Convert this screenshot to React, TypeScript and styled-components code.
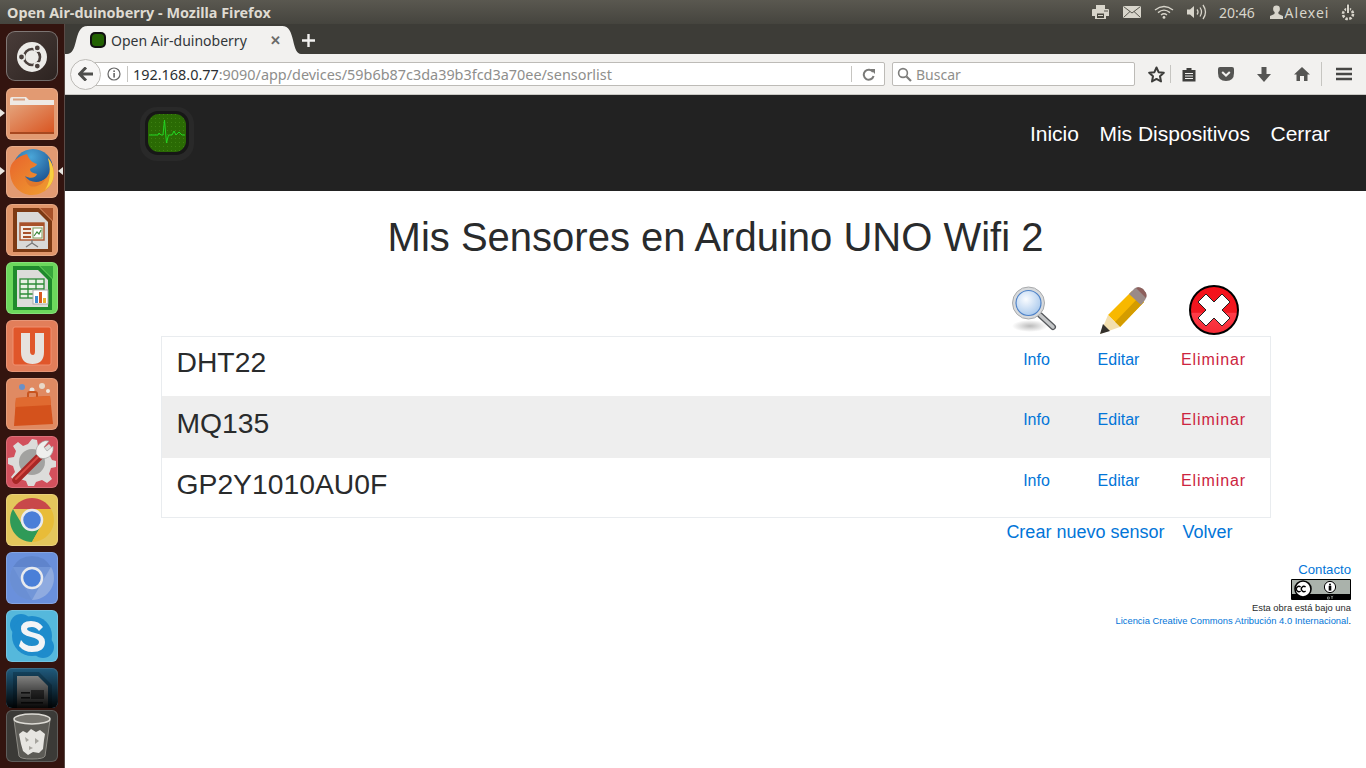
import styled, { createGlobalStyle } from "styled-components";
import type { ReactNode } from "react";

const GlobalStyle = createGlobalStyle`
  html, body { margin: 0; padding: 0; height: 100%; background: #fff; overflow: hidden; }
  #root { height: 100%; }
  * { box-sizing: border-box; }
`;

const UI_FONT = `"Noto Sans", "Open Sans", sans-serif`;
const WEB_FONT = `"Liberation Sans", Arial, sans-serif`;

/* ---------- desktop shell ---------- */
const Desktop = styled.div`
  width: 1366px;
  height: 768px;
  display: flex;
  flex-direction: column;
  overflow: hidden;
`;

const TopPanel = styled.div`
  height: 24px;
  flex-shrink: 0;
  display: flex;
  align-items: center;
  justify-content: space-between;
  padding-left: 7px;
  background: linear-gradient(#5a5850, #45443e);
  font-family: ${UI_FONT};
`;

const WindowTitle = styled.div`
  font-size: 14.4px;
  font-weight: 700;
  color: #dfdbd2;
`;

const Tray = styled.div`
  display: flex;
  align-items: center;
  height: 24px;
`;

const TraySlot = styled.div<{ $w: number }>`
  width: ${(p) => p.$w}px;
  display: flex;
  justify-content: center;
  align-items: center;
  font-size: 14px;
  color: #d8d5cb;
  white-space: nowrap;
`;

const ClockSlot = styled(TraySlot)`
  justify-content: flex-start;
  padding-left: 5px;
`;

const UserName = styled(TraySlot)`
  letter-spacing: 1px;
`;

const Body = styled.div`
  flex: 1;
  display: flex;
  min-height: 0;
`;

const Launcher = styled.div`
  width: 65px;
  flex-shrink: 0;
  position: relative;
  display: flex;
  flex-direction: column;
  align-items: flex-start;
  padding: 7px 0 0 6px;
  gap: 6px;
  background: #33140f;
  border-right: 1px solid #5a4a46;
  overflow: hidden;
`;

const Tile = styled.div<{ $bg: string; $cut?: boolean }>`
  width: 52px;
  height: ${(p) => (p.$cut ? 40 : 52)}px;
  flex-shrink: 0;
  border-radius: 6px;
  background: ${(p) => p.$bg};
  box-shadow: inset 0 0 0 1px rgba(255, 255, 255, 0.18);
  overflow: hidden;
  position: relative;
`;

const DashTile = styled(Tile)`
  height: 50px;
  margin-bottom: 1px;
  border-radius: 9px;
  box-shadow: inset 0 0 0 1px rgba(255, 255, 255, 0.32);
`;

const CutFade = styled.div`
  position: absolute;
  inset: 0;
  background: linear-gradient(rgba(0, 0, 0, 0.25), rgba(0, 0, 0, 0.97));
`;

const TrashTile = styled(Tile)`
  margin-top: -4px;
`;

const Pip = styled.div<{ $top: number; $right?: boolean }>`
  position: absolute;
  top: ${(p) => p.$top}px;
  ${(p) => (p.$right ? "right: 1px;" : "left: 0;")}
  width: 0;
  height: 0;
  border-top: 4px solid transparent;
  border-bottom: 4px solid transparent;
  ${(p) =>
    p.$right
      ? "border-right: 5px solid #e8e6e1;"
      : "border-left: 5px solid #e8e6e1;"}
`;

/* ---------- browser chrome ---------- */
const Browser = styled.div`
  flex: 1;
  min-width: 0;
  display: flex;
  flex-direction: column;
`;

const TabStrip = styled.div`
  height: 30px;
  flex-shrink: 0;
  display: flex;
  align-items: flex-end;
  padding-left: 22px;
  background: #3d3c37;
  font-family: ${UI_FONT};
`;

const Tab = styled.div`
  position: relative;
  width: 196px;
  height: 28px;
  display: flex;
  align-items: center;
  gap: 5px;
  background: #f2f1ef;
  font-size: 14px;
  color: #33373a;
  padding: 0 2px 0 3px;
`;

const TabEdge = styled.svg<{ $side: "left" | "right" }>`
  position: absolute;
  top: 0;
  ${(p) => (p.$side === "left" ? "left: -20px;" : "right: -18px;")}
  display: block;
`;

const TabTitle = styled.span`
  flex: 1;
  white-space: nowrap;
`;

const TabClose = styled.span`
  font-size: 13px;
  font-weight: 700;
  color: #6a6a68;
`;

const NewTab = styled.div`
  width: 24px;
  height: 28px;
  margin-left: 13px;
  display: flex;
  align-items: center;
  justify-content: center;
`;

const Toolbar = styled.div`
  height: 41px;
  flex-shrink: 0;
  display: flex;
  align-items: center;
  padding-left: 5px;
  background: #f2f1ef;
  border-bottom: 1px solid #c9c8c4;
  font-family: ${UI_FONT};
`;

const BackButton = styled.div`
  position: relative;
  z-index: 1;
  width: 31px;
  height: 31px;
  margin-right: -15px;
  border-radius: 50%;
  background: #f7f6f5;
  border: 1px solid #bdbbb7;
  display: flex;
  align-items: center;
  justify-content: center;
`;

const Field = styled.div<{ $w: number }>`
  width: ${(p) => p.$w}px;
  height: 24px;
  flex-shrink: 0;
  display: flex;
  align-items: center;
  background: #fff;
  border: 1px solid #bdbbb7;
  border-radius: 2px;
`;

const UrlField = styled(Field)`
  padding-left: 13px;
  margin-right: 7px;
`;

const UrlText = styled.div`
  flex: 1;
  padding-left: 5px;
  font-size: 14.42px;
  color: #8e8e8c;
  white-space: nowrap;
`;

const UrlHost = styled.span`
  color: #2b2f33;
`;

const Divider = styled.div<{ $h: number }>`
  width: 1px;
  height: ${(p) => p.$h}px;
  background: #c6c5c1;
  flex-shrink: 0;
`;

const InfoSlot = styled.div`
  width: 27px;
  display: flex;
  justify-content: center;
`;

const ReloadSlot = styled.div`
  width: 32px;
  display: flex;
  justify-content: center;
`;

const SearchIconSlot = styled.div`
  width: 23px;
  display: flex;
  justify-content: center;
`;

const Placeholder = styled.span`
  font-size: 14px;
  color: #8f8f8c;
`;

const ToolSlot = styled.div<{ $w: number }>`
  width: ${(p) => p.$w}px;
  flex-shrink: 0;
  display: flex;
  justify-content: center;
  align-items: center;
`;

const ToolGroup = styled.div`
  display: flex;
  align-items: center;
  margin-left: 8px;
`;

/* ---------- page ---------- */
const Page = styled.div`
  flex: 1;
  background: #fff;
  font-family: ${WEB_FONT};
  color: #292b2c;
`;

const NavBar = styled.div`
  height: 96px;
  display: flex;
  justify-content: space-between;
  background: #222;
  padding: 11px 36px 0 74px;
`;

const LogoWrap = styled.div`
  filter: blur(0.4px);
`;

const NavLinks = styled.div`
  display: flex;
  gap: 20.5px;
  padding-top: 16px;
`;

const NavLink = styled.a`
  font-size: 21px;
  line-height: 24px;
  color: #fff;
`;

const Container = styled.div`
  width: 1110px;
  margin: 0 auto;
`;

const PageTitle = styled.h1`
  margin: 0;
  padding-top: 22px;
  font-size: 40px;
  line-height: 48px;
  font-weight: 400;
  text-align: center;
`;

const ActionGrid = styled.div`
  display: grid;
  grid-template-columns: 1fr 82px 82px 108px;
  padding-right: 3px;
`;

const IconRow = styled(ActionGrid)`
  height: 51px;
  margin-top: 24px;
  align-items: start;
`;

const IconCell = styled.div`
  display: flex;
  justify-content: center;
`;

const SensorList = styled.div`
  border: 1px solid #e9ecef;
  display: flex;
  flex-direction: column;
`;

const SensorRow = styled(ActionGrid)<{ $striped?: boolean; $h: number }>`
  height: ${(p) => p.$h}px;
  background: ${(p) => (p.$striped ? "#eee" : "#fff")};
  padding-left: 15px;
  padding-right: 2px;
`;

const SensorName = styled.div<{ $pad: number }>`
  font-size: 28.3px;
  line-height: 34px;
  padding-top: ${(p) => p.$pad}px;
`;

const ActionLink = styled.a<{ $danger?: boolean; $pad: number }>`
  text-align: center;
  font-size: 16px;
  line-height: 24px;
  padding-top: ${(p) => p.$pad}px;
  color: ${(p) => (p.$danger ? "#cc2440" : "#0275d8")};
  letter-spacing: ${(p) => (p.$danger ? "0.9px" : "0")};
`;

const BottomLinks = styled.div`
  display: flex;
  justify-content: flex-end;
  gap: 18px;
  padding: 2px 38px 0 0;
`;

const BottomLink = styled.a`
  font-size: 18px;
  line-height: 24px;
  color: #0275d8;
`;

const Footer = styled.div`
  margin-top: 18px;
  padding-right: 15px;
  display: flex;
  flex-direction: column;
  align-items: flex-end;
`;

const ContactLink = styled.a`
  font-size: 13.2px;
  line-height: 16px;
  color: #0275d8;
`;

const Badge = styled.div`
  height: 21px;
  margin: 1px 0 1px;
  display: flex;
`;

const License = styled.div`
  font-size: 9.4px;
  line-height: 13px;
  text-align: right;
  color: #292b2c;
`;

const LicenseLink = styled.a`
  color: #0275d8;
`;

/* ---------- launcher drawings ---------- */
const Svg = ({ w, h, children }: { w: number; h: number; children: ReactNode }) => (
  <svg width={w} height={h} viewBox={`0 0 ${w} ${h}`} style={{ display: "block" }}>
    {children}
  </svg>
);

const UbuntuGlyph = () => (
  <Svg w={52} h={50}>
    <circle cx="26" cy="26" r="15" fill="#ecebe8" />
    <circle cx="26" cy="26" r="8" fill="none" stroke="#4a403d" strokeWidth="2.6" />
    <g fill="#4a403d" stroke="#ecebe8" strokeWidth="1.6">
      <circle cx="15.5" cy="26" r="3.2" />
      <circle cx="31.3" cy="16.9" r="3.2" />
      <circle cx="31.3" cy="35.1" r="3.2" />
    </g>
  </Svg>
);

const FolderGlyph = () => (
  <Svg w={52} h={52}>
    <defs>
      <linearGradient id="fold" x1="0" y1="0" x2="1" y2="1">
        <stop offset="0" stopColor="#e4a27a" />
        <stop offset="1" stopColor="#d9531f" />
      </linearGradient>
    </defs>
    <path d="M4 11 Q4 9 6 9 H20 L23 12 H48 V46 H4 Z" fill="#eee9e4" />
    <rect x="4" y="17" width="44" height="29" fill="url(#fold)" />
    <rect x="4" y="44" width="44" height="2" fill="#a8481f" />
    <rect x="7" y="10.5" width="12" height="2" fill="#d8a080" />
  </Svg>
);

const FirefoxGlyph = () => (
  <Svg w={52} h={52}>
    <defs>
      <radialGradient id="globe" cx="0.45" cy="0.2" r="0.85">
        <stop offset="0" stopColor="#4aa6d8" />
        <stop offset="1" stopColor="#123f80" />
      </radialGradient>
      <linearGradient id="fox" x1="0" y1="0" x2="1" y2="1">
        <stop offset="0" stopColor="#e8642c" />
        <stop offset="1" stopColor="#f0a030" />
      </linearGradient>
    </defs>
    <circle cx="27" cy="23" r="20" fill="url(#globe)" />
    <path d="M4 25 C4 39 14 49 26 49 C39 49 49 38 48 26 C47.5 20 45 15 42 12 C45 20 45 28 39 33 C32 39 21 37 19 30 C24 33 30 32 31 28 C27 27 24 26 24 23 C27 21 30 21 31 18 C27 17 23 14 21 8 C12 10 4 16 4 25 Z" fill="url(#fox)" />
    <path d="M42 12 C46 17 48.5 24 47.5 31 C46.5 37 43 41 39 44 C43 38 46 28 42 12 Z" fill="#f8d040" />
    <path d="M19 30 C23 37 34 38 40 32 C37 39 29 42 24 40 C21 38 19 34 19 30 Z" fill="#e0782c" />
  </Svg>
);

const ImpressGlyph = () => (
  <Svg w={52} h={52}>
    <path d="M7 4 H33 L46 17 V48 H7 Z" fill="#7d3a14" />
    <path d="M11 8 H32 L42 18 V45 H11 Z" fill="#d9d9d7" />
    <path d="M34 4 L47 4 L47 17 Z" fill="#a8522a" />
    <rect x="14" y="19" width="24" height="17" fill="#f2ece4" stroke="#a8522a" strokeWidth="1.4" />
    <rect x="14" y="19" width="24" height="3" fill="#a8522a" />
    <g fill="#a8522a">
      <rect x="17" y="24" width="8" height="2" />
      <rect x="17" y="28" width="8" height="2" />
      <rect x="17" y="32" width="8" height="2" />
    </g>
    <rect x="27" y="24" width="9" height="10" fill="#fff" stroke="#7a9a58" />
    <path d="M28 32 L31 28 L33 30 L35 26" stroke="#3c8a3c" strokeWidth="1.2" fill="none" />
    <path d="M26 36 V39 M26 39 L20 43 M26 39 L32 43" stroke="#777" strokeWidth="1.3" />
  </Svg>
);

const CalcGlyph = () => (
  <Svg w={52} h={52}>
    <path d="M7 4 H33 L46 17 V48 H7 Z" fill="#1f8a2c" />
    <path d="M11 8 H32 L42 18 V45 H11 Z" fill="#dcdcda" />
    <path d="M34 4 L47 4 L47 17 Z" fill="#38a83c" />
    <g stroke="#2c8a36" strokeWidth="1.3" fill="#e8f0e4">
      <rect x="14" y="17" width="24" height="19" />
      <path d="M14 22 H38 M14 27 H38 M14 32 H38 M22 17 V36 M30 17 V36" fill="none" />
    </g>
    <rect x="27" y="28" width="15" height="14" fill="#fff" stroke="#aaa" />
    <rect x="29" y="34" width="3" height="7" fill="#3a8ad0" />
    <rect x="33" y="30" width="3" height="11" fill="#d85a20" />
    <rect x="37" y="36" width="3" height="5" fill="#e8b030" />
  </Svg>
);

const UbuntuOneGlyph = () => (
  <Svg w={52} h={52}>
    <rect x="7" y="7" width="38" height="38" rx="2" fill="#e0562a" stroke="#f09070" />
    <path d="M15 13 H24 V31 Q24 35 27 35 Q29 35 29 31 V13 H38 V32 Q38 44 26.5 44 Q15 44 15 32 Z" fill="#e6e2de" />
  </Svg>
);

const SoftwareGlyph = () => (
  <Svg w={52} h={52}>
    <circle cx="16" cy="9" r="3" fill="#6a90c8" />
    <circle cx="26" cy="12" r="2.5" fill="#e8e4e0" />
    <circle cx="36" cy="8" r="3" fill="#e8d8c8" />
    <circle cx="42" cy="13" r="2" fill="#f0e8e0" />
    <path d="M22 19 V16 Q22 14 24 14 H29 Q31 14 31 16 V19" fill="none" stroke="#c8541e" strokeWidth="2" />
    <path d="M10 20 L44 18 L47 46 L8 48 Z" fill="#d4521c" />
    <path d="M10 20 L44 18 L45 27 L9 29 Z" fill="#e06a30" />
  </Svg>
);

const SettingsGlyph = () => (
  <Svg w={52} h={52}>
    <path d="M26 3 L31 4 L32 10 L38 12 L43 8 L47 13 L43 18 L46 24 L50 25 V31 L45 32 L43 38 L46 43 L41 47 L36 44 L30 46 L28 50 H22 L20 45 L14 43 L9 46 L5 41 L9 36 L7 30 L2 28 V22 L8 21 L10 15 L7 10 L12 6 L17 10 L22 8 Z" fill="#dcdcda" />
    <circle cx="26" cy="26" r="13" fill="#a2a2a0" />
    <path d="M10 44 L33 21" stroke="#a82826" strokeWidth="7.5" strokeLinecap="round" />
    <path d="M10 43 L32 21" stroke="#d84a44" strokeWidth="2" strokeLinecap="round" />
    <path d="M30 18 Q29 10 36 6 Q39 4 43 5 L38 11 L41 15 L47 10 Q48 15 45 19 Q40 24 34 22 Z" fill="#efefed" stroke="#9a9a98" strokeWidth="0.6" />
  </Svg>
);

const ChromeGlyph = ({ dim }: { dim?: boolean }) => (
  <Svg w={52} h={52}>
    {dim ? (
      <>
        <circle cx="26" cy="26" r="22" fill="#7296d8" />
        <path d="M26 4 A22 22 0 0 1 45 15 H26 Z M7 15 A22 22 0 0 1 26 4 V15 Z" fill="#5f84cc" />
        <path d="M45 15 A22 22 0 0 1 26 48 L36 30 Z" fill="#8fabe0" />
        <path d="M7 15 A22 22 0 0 0 26 48 L16 31 Z" fill="#6a8fd4" />
      </>
    ) : (
      <>
        <path d="M7 15 A22 22 0 0 1 45 15 H26 Z" fill="#c8484a" />
        <path d="M7 15 A22 22 0 0 0 26 48 L36 30 L17 32 Z" fill="#2f9a58" />
        <path d="M45 15 A22 22 0 0 1 26 48 L36 30 L26 15 Z" fill="#e8bc38" />
      </>
    )}
    <circle cx="26" cy="26" r="10" fill="#4a7fd8" stroke="#e8eaee" strokeWidth="2.5" />
  </Svg>
);

const SkypeGlyph = () => (
  <Svg w={52} h={52}>
    <circle cx="15" cy="15" r="11" fill="#1e8ccc" />
    <circle cx="37" cy="37" r="11" fill="#1e8ccc" />
    <circle cx="26" cy="26" r="20" fill="#1e8ccc" />
    <path d="M37 17 Q33 11 25 11 Q15 11 15 19 Q15 25 25 27 Q33 29 33 32 Q33 36 26 36 Q19 36 15 30 L13 36 Q18 42 26 42 Q39 42 39 32 Q39 25 29 23 Q21 21 21 19 Q21 17 26 17 Q30 17 33 21 Z" fill="#f2f4f6" />
  </Svg>
);

const WriterGlyph = () => (
  <Svg w={52} h={40}>
    <path d="M7 4 H33 L46 17 V48 H7 Z" fill="#1d5f86" />
    <path d="M11 8 H32 L42 18 V45 H11 Z" fill="#d4d4d2" />
    <path d="M34 4 L47 4 L47 17 Z" fill="#2a78a8" />
    <rect x="15" y="24" width="9" height="1.6" fill="#333" />
    <rect x="15" y="29" width="9" height="1.6" fill="#333" />
    <rect x="15" y="34" width="22" height="1.6" fill="#333" />
    <rect x="25" y="22" width="13" height="9" fill="#666" />
  </Svg>
);

const TrashGlyph = () => (
  <Svg w={52} h={52}>
    <path d="M8 10 L13 46 Q14 49 26 49 Q38 49 39 46 L44 10 Z" fill="#5c5b56" stroke="#8e8c86" strokeWidth="1" />
    <ellipse cx="26" cy="9" rx="18" ry="5" fill="#77756f" stroke="#dddbd5" strokeWidth="1.6" />
    <path d="M13 24 L17 21 L21 23 L25 19 L30 22 L34 20 L39 24 L38 30 L37 39 L33 43 L27 42 L22 45 L17 41 L15 34 Z" fill="#e6e5e1" />
    <g fill="#a6a49e">
      <path d="M19 27 L23 30 L20 32 Z" />
      <path d="M29 28 L33 31 L29 34 Z" />
      <path d="M23 36 L27 38 L23 40 Z" />
    </g>
  </Svg>
);

/* ---------- small icons ---------- */
const MonitorLogo = () => (
  <svg width="56" height="56" viewBox="0 0 56 56" style={{ display: "block" }}>
    <defs>
      <pattern id="scope" width="4" height="4" patternUnits="userSpaceOnUse">
        <rect width="4" height="4" fill="#2a6a04" />
        <rect width="1" height="1" fill="#3d8012" />
      </pattern>
    </defs>
    <rect x="1" y="1" width="54" height="54" rx="17" fill="#292929" />
    <rect x="6" y="5" width="44" height="44" rx="13" fill="#171717" />
    <rect x="9" y="8" width="38" height="38" rx="11" fill="url(#scope)" />
    <path d="M10 29 H19 L20 27 L22 29 H24 L25.5 14 L27.5 37 L29.5 29 H33 L35 25 L37 29 L40 26 L43 29 H46" fill="none" stroke="#22d622" strokeWidth="1" />
  </svg>
);

const Magnifier = () => (
  <svg width="56" height="50" viewBox="-4 0 56 50" style={{ display: "block" }}>
    <defs>
      <radialGradient id="lens" cx="0.4" cy="0.35" r="0.7">
        <stop offset="0" stopColor="#fafcff" />
        <stop offset="1" stopColor="#a8c8ec" />
      </radialGradient>
      <radialGradient id="shade">
        <stop offset="0" stopColor="#bbb" />
        <stop offset="1" stopColor="#fff" />
      </radialGradient>
    </defs>
    <ellipse cx="17" cy="41" rx="18" ry="6" fill="url(#shade)" />
    <path d="M27 30 L40 42" stroke="#55585c" strokeWidth="6" strokeLinecap="round" />
    <path d="M27 30 L40 42" stroke="#c4c6c8" strokeWidth="3.4" strokeLinecap="round" />
    <circle cx="15.5" cy="18" r="16" fill="#d8dadc" stroke="#a8aaac" strokeWidth="1" />
    <circle cx="15.5" cy="18" r="12.5" fill="url(#lens)" stroke="#4d82c8" strokeWidth="1.2" />
  </svg>
);

const Pencil = () => (
  <svg width="58" height="50" viewBox="-8 0 58 50" style={{ display: "block", filter: "blur(0.4px)" }}>
    <path d="M10 30 L34 6 L46 17 L22 42 Z" fill="#f8b800" />
    <path d="M17 37 L41 12 L46 17 L22 42 Z" fill="#d49c00" />
    <path d="M31 9 L37 3 Q41 1 45 4 L48 8 Q49 12 47 15 L43 20 Z" fill="#9a8a88" />
    <path d="M38 3 Q41 1 45 4 L48 8 Q49 11 48 13 Z" fill="#8d5f5c" />
    <path d="M10 30 L22 42 L2 49 Z" fill="#f3dfae" />
    <path d="M5 39 L12 46 L2 49 Z" fill="#33302c" />
  </svg>
);

const RedCross = () => (
  <svg width="50" height="50" viewBox="0 0 50 50" style={{ display: "block" }}>
    <defs>
      <linearGradient id="redball" x1="0" y1="0" x2="0" y2="1">
        <stop offset="0" stopColor="#f5101a" />
        <stop offset="0.55" stopColor="#f01820" />
        <stop offset="0.56" stopColor="#ff3c48" />
        <stop offset="1" stopColor="#f52a35" />
      </linearGradient>
    </defs>
    <circle cx="25" cy="25" r="24" fill="url(#redball)" stroke="#000" strokeWidth="2" />
    <path d="M17 9 L25 17 L33 9 L41 17 L33 25 L41 33 L33 41 L25 33 L17 41 L9 33 L17 25 L9 17 Z" fill="#fff" stroke="#222" strokeWidth="1" strokeLinejoin="round" />
  </svg>
);

const CcBadge = () => (
  <svg width="60" height="21" viewBox="0 0 60 21" style={{ display: "block" }}>
    <rect width="60" height="21" rx="1" fill="#000" />
    <rect x="1" y="1" width="58" height="14" fill="#aab2ab" />
    <circle cx="12" cy="10" r="8" fill="#fff" stroke="#000" strokeWidth="1.6" />
    <path d="M11 8 A2.6 2.6 0 1 0 11 12 M16 8 A2.6 2.6 0 1 0 16 12" fill="none" stroke="#000" strokeWidth="1.3" transform="translate(-1.4 0)" />
    <circle cx="39" cy="8" r="5.6" fill="#fff" stroke="#000" strokeWidth="1" />
    <circle cx="39" cy="5.4" r="1" fill="#000" />
    <rect x="37.7" y="6.8" width="2.6" height="4.8" fill="#000" />
    <path d="M36.5 18 H38 Q39 18 38 19 Q39 20 38 20 H36.5 Z M40 16.8 L41 18.3 L42 16.8 M41 18.3 V20" fill="none" stroke="#aab2ab" strokeWidth="0.7" />
  </svg>
);

const Tiny = ({ w, h, children }: { w: number; h: number; children: ReactNode }) => (
  <svg width={w} height={h} viewBox={`0 0 ${w} ${h}`} style={{ display: "block" }}>
    {children}
  </svg>
);

const TRAY = "#d8d5cb";
const TOOL = "#555553";

export default function App() {
  const sensors = [
    { name: "DHT22", h: 59, namePad: 8, linkPad: 11 },
    { name: "MQ135", h: 62, namePad: 10, linkPad: 12, striped: true },
    { name: "GP2Y1010AU0F", h: 59, namePad: 9, linkPad: 11 },
  ];

  return (
    <Desktop>
      <GlobalStyle />
      <TopPanel>
        <WindowTitle>Open Air-duinoberry - Mozilla Firefox</WindowTitle>
        <Tray>
          <TraySlot $w={32}>
            <Tiny w={17} h={16}>
              <path d="M4 1 H13 V5 H16 Q17 5 17 6 V12 H14 V15 H3 V12 H0 V6 Q0 5 1 5 H4 Z" fill={TRAY} />
              <rect x="5" y="9.5" width="7" height="4.5" fill="#48473f" />
              <rect x="6" y="11" width="5" height="1" fill={TRAY} />
              <circle cx="13" cy="7" r="0.8" fill="#48473f" />
              <circle cx="15" cy="7" r="0.8" fill="#48473f" />
            </Tiny>
          </TraySlot>
          <TraySlot $w={32}>
            <Tiny w={18} h={12}>
              <rect width="18" height="12" fill={TRAY} />
              <path d="M0.5 0.5 L9 7 L17.5 0.5 M0.5 11.5 L7 5.5 M17.5 11.5 L11 5.5" fill="none" stroke="#48473f" strokeWidth="0.9" />
            </Tiny>
          </TraySlot>
          <TraySlot $w={32}>
            <Tiny w={20} h={14}>
              <path d="M1 5 Q10 -2 19 5 M4 7.6 Q10 2.6 16 7.6 M7 10 Q10 7.6 13 10" fill="none" stroke={TRAY} strokeWidth="1.4" />
              <circle cx="10" cy="12.4" r="1.4" fill={TRAY} />
            </Tiny>
          </TraySlot>
          <TraySlot $w={34}>
            <Tiny w={20} h={16}>
              <path d="M0 5.5 H3 L7 2 V14 L3 10.5 H0 Z" fill={TRAY} />
              <path d="M10 5.5 Q12 8 10 10.5 M13 3.5 Q16 8 13 12.5 M16 1 Q21 8 16 15" fill="none" stroke={TRAY} strokeWidth="1.3" />
            </Tiny>
          </TraySlot>
          <ClockSlot $w={53}>20:46</ClockSlot>
          <TraySlot $w={18}>
            <Tiny w={13} h={14}>
              <circle cx="6.5" cy="4" r="3.4" fill={TRAY} />
              <path d="M4.8 6.5 H8.2 L8.6 9 L13 11 V14 H0 V11 L4.4 9 Z" fill={TRAY} />
            </Tiny>
          </TraySlot>
          <UserName $w={44}>Alexei</UserName>
          <TraySlot $w={37}>
            <Tiny w={16} h={17}>
              <circle cx="8" cy="10" r="5" fill="none" stroke={TRAY} strokeWidth="2.6" strokeDasharray="2.5 1.4" />
              <path d="M8 0 V9" stroke="#45443e" strokeWidth="3.6" />
              <path d="M8 0.5 V9" stroke={TRAY} strokeWidth="2" />
            </Tiny>
          </TraySlot>
        </Tray>
      </TopPanel>

      <Body>
        <Launcher>
          <DashTile $bg="linear-gradient(135deg,#4a3d3a,#2c2320)">
            <UbuntuGlyph />
          </DashTile>
          <Tile $bg="#e29a72">
            <FolderGlyph />
          </Tile>
          <Tile $bg="#e29a72">
            <FirefoxGlyph />
          </Tile>
          <Tile $bg="#e0956a">
            <ImpressGlyph />
          </Tile>
          <Tile $bg="#6cd85c">
            <CalcGlyph />
          </Tile>
          <Tile $bg="#e27e5a">
            <UbuntuOneGlyph />
          </Tile>
          <Tile $bg="#e08a62">
            <SoftwareGlyph />
          </Tile>
          <Tile $bg="#d2505c">
            <SettingsGlyph />
          </Tile>
          <Tile $bg="#e4c65c">
            <ChromeGlyph />
          </Tile>
          <Tile $bg="#6a90dc">
            <ChromeGlyph dim />
          </Tile>
          <Tile $bg="#55b8dc">
            <SkypeGlyph />
          </Tile>
          <Tile $bg="#2a7aa8" $cut>
            <WriterGlyph />
            <CutFade />
          </Tile>
          <TrashTile $bg="#3b3a37">
            <TrashGlyph />
          </TrashTile>
          <Pip $top={85} />
          <Pip $top={143} />
          <Pip $top={143} $right />
        </Launcher>

        <Browser>
          <TabStrip>
            <Tab>
              <TabEdge $side="left" width="21" height="28" viewBox="0 0 21 28">
                <path d="M21 0 C12 0 11 8 9 15 C7 23 5 28 0 28 H21 Z" fill="#f2f1ef" />
              </TabEdge>
              <Tiny w={16} h={16}>
                <rect x="0" y="0" width="16" height="16" rx="5" fill="#111" />
                <rect x="2" y="2" width="12" height="12" rx="3.5" fill="#226102" />
              </Tiny>
              <TabTitle>Open Air-duinoberry</TabTitle>
              <TabClose>✕</TabClose>
              <TabEdge $side="right" width="19" height="28" viewBox="0 0 19 28">
                <path d="M0 0 C7 0 9 6 11 14 C13 23 15 28 19 28 H0 Z" fill="#f2f1ef" />
              </TabEdge>
            </Tab>
            <NewTab>
              <Tiny w={13} h={13}>
                <path d="M6.5 0 V13 M0 6.5 H13" stroke="#f2f1ef" strokeWidth="2.4" />
              </Tiny>
            </NewTab>
          </TabStrip>

          <Toolbar>
            <BackButton>
              <Tiny w={16} h={14}>
                <path d="M8 0.5 L1.5 7 L8 13.5 M2 7 H15" fill="none" stroke="#4e4e4c" strokeWidth="3" />
              </Tiny>
            </BackButton>
            <UrlField $w={799}>
              <InfoSlot>
                <Tiny w={14} h={14}>
                  <circle cx="7" cy="7" r="6" fill="none" stroke="#666" strokeWidth="1.2" />
                  <rect x="6.3" y="6" width="1.6" height="4.6" fill="#666" />
                  <rect x="6.3" y="3.4" width="1.6" height="1.6" fill="#666" />
                </Tiny>
              </InfoSlot>
              <Divider $h={16} />
              <UrlText>
                <UrlHost>192.168.0.77</UrlHost>:9090/app/devices/59b6b87c3da39b3fcd3a70ee/sensorlist
              </UrlText>
              <Divider $h={16} />
              <ReloadSlot>
                <Tiny w={13} h={13}>
                  <path d="M11 4 A5 5 0 1 0 11.6 8" fill="none" stroke="#7a7a78" strokeWidth="2" />
                  <path d="M8 1 H13 V6 Z" fill="#7a7a78" />
                </Tiny>
              </ReloadSlot>
            </UrlField>
            <Field $w={243}>
              <SearchIconSlot>
                <Tiny w={15} h={15}>
                  <circle cx="6" cy="6" r="4.4" fill="none" stroke="#7d7d7b" strokeWidth="1.6" />
                  <path d="M9.5 9.5 L14 14" stroke="#7d7d7b" strokeWidth="2.2" />
                </Tiny>
              </SearchIconSlot>
              <Placeholder>Buscar</Placeholder>
            </Field>
            <ToolGroup>
              <ToolSlot $w={27}>
                <Tiny w={17} h={17}>
                  <path d="M8.5 1.5 L10.6 6.2 L15.8 6.8 L12 10.3 L13 15.5 L8.5 12.9 L4 15.5 L5 10.3 L1.2 6.8 L6.4 6.2 Z" fill="none" stroke="#3c3c3a" strokeWidth="2" strokeLinejoin="round" />
                </Tiny>
              </ToolSlot>
              <Divider $h={18} />
              <ToolSlot $w={35}>
                <Tiny w={14} h={15}>
                  <path d="M0.5 3 H4.5 V1 H9.5 V3 H13.5 V14.5 H0.5 Z" fill="#3f3f3d" />
                  <path d="M3 6.5 H11 M3 9 H11 M3 11.5 H11" stroke="#f2f1ef" strokeWidth="1.2" />
                </Tiny>
              </ToolSlot>
              <ToolSlot $w={39}>
                <Tiny w={16} h={14}>
                  <path d="M2 0 H14 Q16 0 16 2 V6 Q16 14 8 14 Q0 14 0 6 V2 Q0 0 2 0 Z" fill={TOOL} />
                  <path d="M4.2 5 L8 8.6 L11.8 5" fill="none" stroke="#f2f1ef" strokeWidth="2" />
                </Tiny>
              </ToolSlot>
              <ToolSlot $w={38}>
                <Tiny w={14} h={15}>
                  <path d="M4.5 0 H9.5 V7 H14 L7 15 L0 7 H4.5 Z" fill={TOOL} />
                </Tiny>
              </ToolSlot>
              <ToolSlot $w={38}>
                <Tiny w={16} h={14}>
                  <path d="M8 0 L16 7.5 H13.5 V14 H10 V9 H6 V14 H2.5 V7.5 H0 Z" fill={TOOL} />
                </Tiny>
              </ToolSlot>
              <Divider $h={24} />
              <ToolSlot $w={44}>
                <Tiny w={16} h={14}>
                  <path d="M0 2 H16 M0 7 H16 M0 12 H16" stroke="#474745" strokeWidth="2.4" />
                </Tiny>
              </ToolSlot>
            </ToolGroup>
          </Toolbar>

          <Page>
            <NavBar>
              <LogoWrap>
                <MonitorLogo />
              </LogoWrap>
              <NavLinks>
                <NavLink>Inicio</NavLink>
                <NavLink>Mis Dispositivos</NavLink>
                <NavLink>Cerrar</NavLink>
              </NavLinks>
            </NavBar>
            <Container>
              <PageTitle>Mis Sensores en Arduino UNO Wifi 2</PageTitle>
              <IconRow>
                <span />
                <IconCell>
                  <Magnifier />
                </IconCell>
                <IconCell>
                  <Pencil />
                </IconCell>
                <IconCell>
                  <RedCross />
                </IconCell>
              </IconRow>
              <SensorList>
                {sensors.map((s) => (
                  <SensorRow key={s.name} $h={s.h} $striped={s.striped}>
                    <SensorName $pad={s.namePad}>{s.name}</SensorName>
                    <ActionLink $pad={s.linkPad}>Info</ActionLink>
                    <ActionLink $pad={s.linkPad}>Editar</ActionLink>
                    <ActionLink $pad={s.linkPad} $danger>
                      Eliminar
                    </ActionLink>
                  </SensorRow>
                ))}
              </SensorList>
              <BottomLinks>
                <BottomLink>Crear nuevo sensor</BottomLink>
                <BottomLink>Volver</BottomLink>
              </BottomLinks>
            </Container>
            <Footer>
              <ContactLink>Contacto</ContactLink>
              <Badge>
                <CcBadge />
              </Badge>
              <License>
                Esta obra está bajo una
                <br />
                <LicenseLink>Licencia Creative Commons Atribución 4.0 Internacional</LicenseLink>.
              </License>
            </Footer>
          </Page>
        </Browser>
      </Body>
    </Desktop>
  );
}
